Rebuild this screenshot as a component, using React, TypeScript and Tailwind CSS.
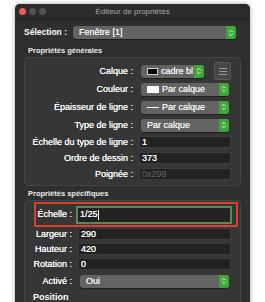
import { ChevronsUpDown } from 'lucide-react'

const font = { fontFamily: '"Liberation Sans", Arial, sans-serif' }

const Stepper = () => (
    <div className="w-[10px] h-full bg-[#3ea83a] rounded-r-[3px] flex items-center justify-center">
        <ChevronsUpDown size={8} strokeWidth={2.5} className="text-white" />
    </div>
)

const Select = ({ children, w }: { children: React.ReactNode; w: string }) => (
    <div className={`${w} h-[13px] bg-[#636363] rounded-[3px] flex items-center shadow-[0_1px_1px_rgba(0,0,0,0.45)]`}>
        <div className="flex-1 flex items-center gap-[2px] pl-[6px] text-[9px] leading-none text-[#f2f2f2] overflow-hidden whitespace-nowrap [text-shadow:0_0_0.4px_#fff]">
            {children}
        </div>
        <Stepper />
    </div>
)

const Field = ({ value, w, muted }: { value: string; w: string; muted?: boolean }) => (
    <div className={`${w} h-[12px] bg-[#222] border border-[#3b3b3b] flex items-center pl-[2px] text-[9px] leading-none ${muted ? 'text-[#666]' : 'text-white [text-shadow:0_0_0.4px_#fff]'}`}>
        {value}
    </div>
)

const label = 'text-right text-[9px] leading-none text-white whitespace-nowrap [text-shadow:0_0_0.5px_#fff]'

const Row = ({ text, h, gap, children }: { text: string; h: string; gap: string; children: React.ReactNode }) => (
    <div className={`flex items-center ${h}`}>
        <div className={`w-[108px] ${label} ${gap}`}>{text} :</div>
        {children}
    </div>
)

const SRow = ({ text, h, gap, children }: { text: string; h: string; gap: string; children: React.ReactNode }) => (
    <div className={`flex items-center ${h}`}>
        <div className={`w-[47px] ${label} ${gap}`}>{text} :</div>
        {children}
    </div>
)

export default function App() {
    return (
        <div className="w-[265px] h-[302px] bg-white overflow-hidden pl-[15px] pt-[4px]" style={font}>
            <div className="w-[235px] h-[310px] bg-[#2f2f2f] rounded-t-[5px] shadow-[0_0_5px_rgba(0,0,0,0.35)]">

                {/* Title bar */}
                <div className="relative h-[16px] bg-[#2b2b2b] rounded-t-[5px] flex items-center pl-[4px] gap-[3px] border-b border-[#1f1f1f]">
                    <div className="w-[7px] h-[7px] rounded-full bg-[#ec5e55]" />
                    <div className="w-[7px] h-[7px] rounded-full bg-[#525252]" />
                    <div className="w-[7px] h-[7px] rounded-full bg-[#525252]" />
                    <div className="absolute inset-0 flex items-center justify-center text-[8px] text-[#a9a9a9]">Éditeur de propriétés</div>
                </div>

                {/* Selection */}
                <div className="flex items-center mt-[6px] pl-[9px]">
                    <div className="w-[49px] text-[8.5px] font-bold text-white whitespace-nowrap">Sélection :</div>
                    <Select w="w-[163px]">Fenêtre [1]</Select>
                </div>

                <div className="mt-[7px] pl-[13px] h-[10px] text-[7.5px] leading-[10px] font-bold text-[#ececec]">Propriétés générales</div>

                {/* General properties */}
                <div className="mt-[1px] ml-[9px] w-[217px] h-[129px] bg-[#363636] border border-[#444] rounded-[4px] pt-[4px]">
                    <div className="flex items-center h-[18px]">
                        <div className={`w-[108px] ${label} mr-[8px]`}>Calque :</div>
                        <Select w="w-[63px]">
                            <span className="shrink-0 w-[11px] h-[7px] bg-black border border-[#d0d0d0]" />
                            <span className="pl-[1px]">cadre bl</span>
                        </Select>
                        <div className="ml-[10px] w-[17px] h-[18px] bg-[#474747] border border-[#585858] rounded-[2px] flex flex-col items-center justify-center gap-[2px]">
                            <div className="w-[8px] h-[1px] bg-[#9a9a9a]" />
                            <div className="w-[8px] h-[1px] bg-[#9a9a9a]" />
                            <div className="w-[8px] h-[1px] bg-[#9a9a9a]" />
                        </div>
                    </div>
                    <Row text="Couleur" h="h-[18px]" gap="mr-[8px]">
                        <Select w="w-[88px]">
                            <span className="shrink-0 w-[12px] h-[7px] bg-white" />
                            <span className="pl-[1px]">Par calque</span>
                        </Select>
                    </Row>
                    <Row text="Épaisseur de ligne" h="h-[18px]" gap="mr-[8px]">
                        <Select w="w-[88px]">
                            <span className="shrink-0 w-[12px] h-[1px] bg-white" />
                            <span className="pl-[1px]">Par calque</span>
                        </Select>
                    </Row>
                    <Row text="Type de ligne" h="h-[18px]" gap="mr-[8px]">
                        <Select w="w-[88px]">Par calque</Select>
                    </Row>
                    <Row text="Échelle du type de ligne" h="h-[16px]" gap="mr-[6px]"><Field value="1" w="w-[92px]" /></Row>
                    <Row text="Ordre de dessin" h="h-[16px]" gap="mr-[6px]"><Field value="373" w="w-[92px]" /></Row>
                    <Row text="Poignée" h="h-[16px]" gap="mr-[6px]"><Field value="0x299" w="w-[92px]" muted /></Row>
                </div>

                <div className="mt-[3px] pl-[13px] h-[10px] text-[7.5px] leading-[10px] font-bold text-[#ececec]">Propriétés spécifiques</div>

                {/* Specific properties */}
                <div className="mt-[1px] ml-[9px] w-[217px] h-[120px] bg-[#363636] border border-[#444] rounded-[4px] pt-[1px]">
                    <div className="ml-[9px] w-[204px] h-[25px] border-2 border-[#d8412a] flex items-center">
                        <div className={`w-[36px] ${label} mr-[4px]`}>Échelle :</div>
                        <div className="w-[156px] h-[18px] bg-[#222] border-2 border-[#5c8756] flex items-center pl-[2px] text-[9px] leading-none text-white [text-shadow:0_0_0.4px_#fff]">
                            1/25<span className="w-[1px] h-[10px] bg-white" />
                        </div>
                    </div>
                    <div className="flex flex-col gap-[1px]">
                        <SRow text="Largeur" h="h-[14px]" gap="mr-[6px]"><Field value="290" w="w-[153px]" /></SRow>
                        <SRow text="Hauteur" h="h-[14px]" gap="mr-[6px]"><Field value="420" w="w-[153px]" /></SRow>
                        <SRow text="Rotation" h="h-[14px]" gap="mr-[6px]"><Field value="0" w="w-[153px]" /></SRow>
                        <SRow text="Activé" h="h-[18px]" gap="mr-[8px]"><Select w="w-[149px]">Oui</Select></SRow>
                    </div>
                    <div className="pl-[8px] pt-[2px] text-[9px] leading-[10px] font-bold text-white">Position</div>
                </div>
            </div>
        </div>
    )
}
